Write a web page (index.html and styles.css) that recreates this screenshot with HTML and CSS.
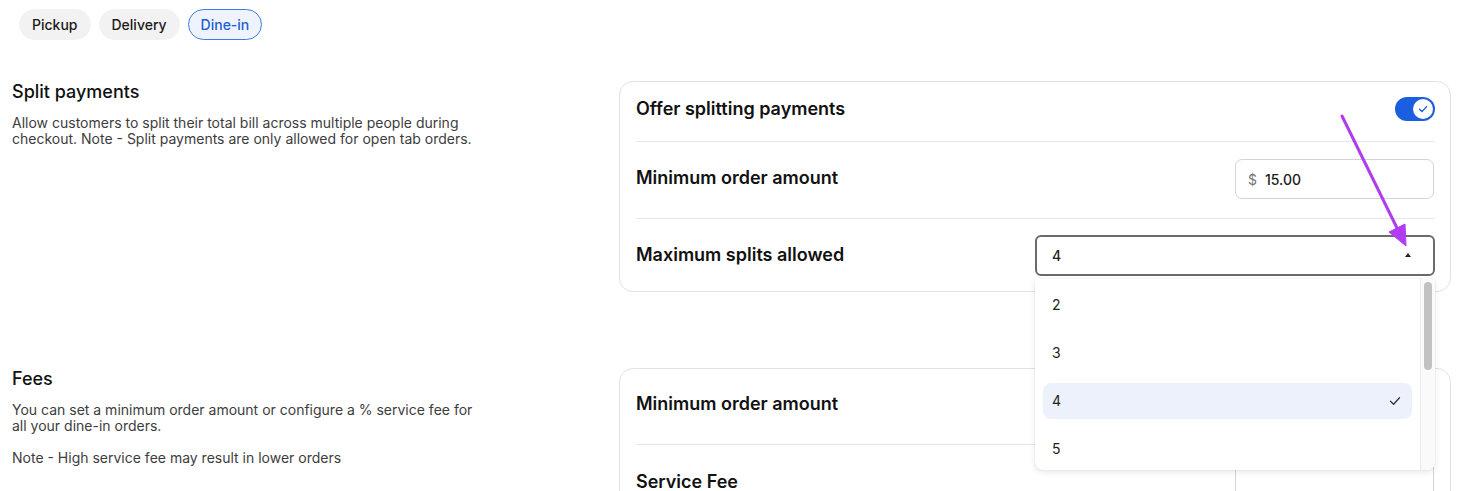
FILE: index.html
```html
<!DOCTYPE html>
<html>
<head>
<meta charset="utf-8">
<link rel="stylesheet" href="styles.css">
</head>
<body>
<div class="page">
  <nav class="tabs">
    <span class="tab">Pickup</span>
    <span class="tab">Delivery</span>
    <span class="tab active">Dine-in</span>
  </nav>

  <section class="section first">
    <div class="info">
      <h2 class="title">Split payments</h2>
      <p class="desc">Allow customers to split their total bill across multiple people during checkout. Note - Split payments are only allowed for open tab orders.</p>
    </div>
    <div class="card">
      <div class="row row-top">
        <span class="label">Offer splitting payments</span>
        <span class="toggle"><span class="knob"><svg width="14" height="14" viewBox="0 0 14 14"><path d="M3.5 7.2 L6 9.6 L10.6 4.6" fill="none" stroke="#1a5fe0" stroke-width="1.4" stroke-linecap="round" stroke-linejoin="round"/></svg></span></span>
      </div>
      <div class="row row-mid">
        <span class="label">Minimum order amount</span>
        <div class="money"><span class="cur">$</span><span>15.00</span></div>
      </div>
      <div class="row row-last">
        <span class="label">Maximum splits allowed</span>
        <div class="select-wrap">
          <div class="select"><span>4</span><span class="caret"></span></div>
          <div class="menu">
            <ul class="options">
              <li class="opt">2</li>
              <li class="opt">3</li>
              <li class="opt selected">4<svg width="14" height="14" viewBox="0 0 14 14"><path d="M2.5 7.3 L5.6 10.2 L11.5 3.8" fill="none" stroke="#333" stroke-width="1.3" stroke-linecap="round" stroke-linejoin="round"/></svg></li>
              <li class="opt">5</li>
            </ul>
            <div class="scroll"><span class="thumb"></span></div>
          </div>
        </div>
      </div>
    </div>
  </section>

  <section class="section second">
    <div class="info">
      <h2 class="title">Fees</h2>
      <p class="desc">You can set a minimum order amount or configure a % service fee for all your dine-in orders.</p>
      <p class="desc">Note - High service fee may result in lower orders</p>
    </div>
    <div class="card">
      <div class="row row-top2">
        <span class="label">Minimum order amount</span>
        <div class="money ghost"></div>
      </div>
      <div class="row row-fee">
        <span class="label">Service Fee</span>
        <div class="money ghost"></div>
      </div>
    </div>
  </section>

  <svg class="arrow" width="90" height="150" viewBox="0 0 90 150">
    <line x1="12" y1="6" x2="67" y2="118" stroke="#b13bf0" stroke-width="3" stroke-linecap="round"/>
    <polygon points="76,136 75,114 59,122" fill="#b13bf0" stroke="#b13bf0" stroke-width="1" stroke-linejoin="round"/>
  </svg>
</div>
</body>
</html>
```

FILE: styles.css
```css
* { box-sizing: border-box; }
html, body { margin: 0; padding: 0; background: #fff; }
body {
  font-family: Inter, "Noto Sans", "Liberation Sans", sans-serif;
  color: #111;
  width: 1477px;
  height: 491px;
  overflow: hidden;
}
.page { position: relative; }

.tabs {
  display: flex;
  gap: 8px;
  padding: 9px 0 0 19px;
}
.tab {
  display: inline-flex;
  align-items: center;
  height: 31px;
  padding: 0 12px;
  border-radius: 16px;
  background: #f2f2f2;
  border: 1px solid #f2f2f2;
  font-size: 14px;
  font-weight: 500;
  color: #1b1b1b;
}
.tab.active {
  background: #eef3fd;
  border-color: #3d7ce6;
  color: #1a5fd6;
}

.section {
  display: grid;
  grid-template-columns: 607px 832px;
  padding-left: 12px;
}
.section.first { margin-top: 41px; }
.section.second { margin-top: 76px; }

.title {
  margin: 0;
  font-size: 18px;
  font-weight: 500;
  line-height: 22px;
  color: #111;
}
.desc {
  margin: 12px 0 0 0;
  width: 475px;
  font-size: 14px;
  line-height: 16px;
  color: #3d3d3d;
}
.desc + .desc { margin-top: 16px; }

.card {
  border: 1px solid #e2e2e2;
  border-radius: 14px;
  padding: 0 16px;
  background: #fff;
}
.row {
  display: flex;
  align-items: center;
  justify-content: space-between;
  border-bottom: 1px solid #e6e6e6;
}
.row:last-child { border-bottom: none; }
.row-top { height: 60px; padding-bottom: 6px; }
.row-mid { height: 77px; padding-bottom: 6px; }
.row-last { height: 72px; padding-bottom: 2px; }
.row-top2 { height: 76px; padding-bottom: 6px; }
.row-fee { height: 72px; }

.label {
  font-size: 18px;
  font-weight: 600;
  color: #111;
}

.toggle {
  width: 40px;
  height: 24px;
  margin-right: -1px;
  border-radius: 12px;
  background: #1a5fe0;
  display: flex;
  align-items: center;
  justify-content: flex-end;
  padding-right: 2px;
}
.knob {
  width: 20px;
  height: 20px;
  border-radius: 50%;
  background: #fff;
  display: flex;
  align-items: center;
  justify-content: center;
}

.money {
  width: 199px;
  height: 40px;
  border: 1px solid #d4d4d4;
  border-radius: 7px;
  display: flex;
  align-items: center;
  gap: 8px;
  padding-left: 12px;
  font-size: 14px;
  font-weight: 500;
  color: #1b1b1b;
}
.row-mid .money { margin-top: 4px; }
.money .cur { color: #777; font-weight: 400; }

.select-wrap { position: relative; margin-right: -1px; margin-top: 2px; }
.select {
  width: 400px;
  height: 41px;
  border: 2px solid #6b6b6b;
  border-radius: 6px;
  display: flex;
  align-items: center;
  justify-content: space-between;
  padding: 0 22px 0 15px;
  font-size: 14px;
  font-weight: 500;
  color: #222;
}
.caret {
  width: 0; height: 0;
  border-left: 3.5px solid transparent;
  border-right: 3.5px solid transparent;
  border-bottom: 4px solid #222;
}

.menu {
  position: absolute;
  top: 44px;
  left: 0;
  width: 400px;
  height: 191px;
  background: #fff;
  border-radius: 0 0 8px 8px;
  box-shadow: 0 2px 6px rgba(0,0,0,0.10), 0 0 1px rgba(0,0,0,0.16);
  display: flex;
  overflow: hidden;
  z-index: 5;
}
.options {
  list-style: none;
  margin: 0;
  padding: 8px 8px 0 8px;
  flex: 1;
}
.opt {
  height: 36px;
  margin: 0 0 12px 0;
  padding: 0 10px 0 9px;
  border-radius: 8px;
  display: flex;
  align-items: center;
  justify-content: space-between;
  font-size: 14px;
  color: #222;
}
.opt.selected { background: #edf1fc; }
.scroll {
  width: 15px;
  border-left: 1px solid #ececec;
  background: #fafafa;
  padding: 3px 2px 0 3px;
}
.thumb {
  display: block;
  width: 8px;
  height: 88px;
  border-radius: 4px;
  background: #c2c2c2;
}

.arrow {
  position: absolute;
  left: 1330px;
  top: 110px;
  z-index: 10;
}
```
